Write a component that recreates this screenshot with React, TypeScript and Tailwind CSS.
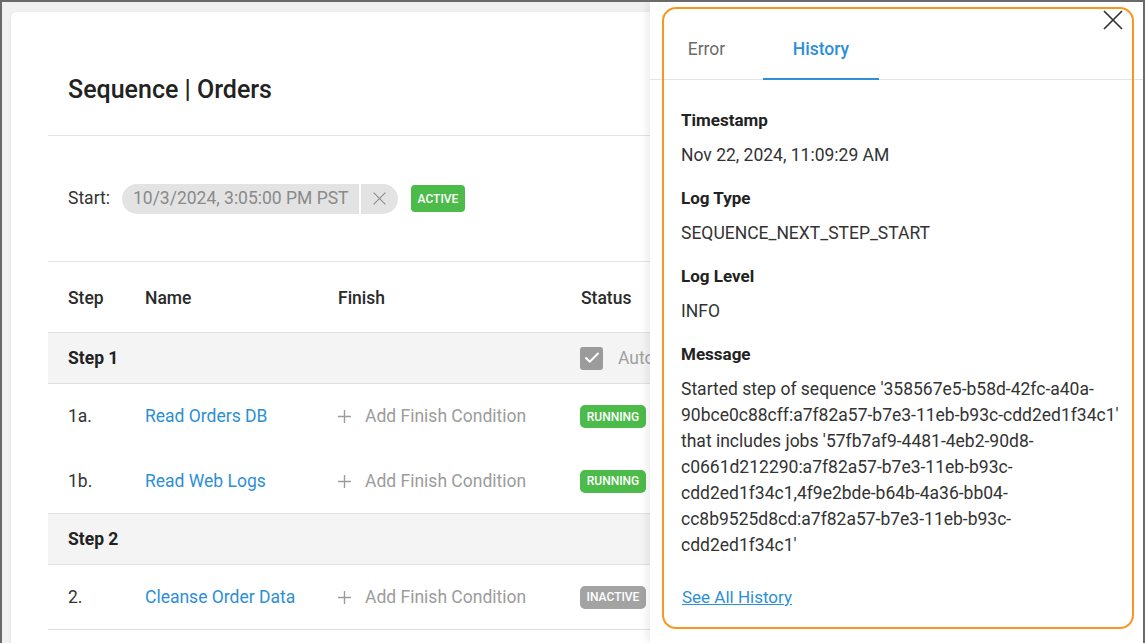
import { Check } from 'lucide-react';

type Row =
  | { kind: 'group'; label: string; auto?: boolean }
  | { kind: 'job'; step: string; name: string; status: 'RUNNING' | 'INACTIVE'; last?: boolean };

const rows: Row[] = [
  { kind: 'group', label: 'Step 1', auto: true },
  { kind: 'job', step: '1a.', name: 'Read Orders DB', status: 'RUNNING' },
  { kind: 'job', step: '1b.', name: 'Read Web Logs', status: 'RUNNING', last: true },
  { kind: 'group', label: 'Step 2' },
  { kind: 'job', step: '2.', name: 'Cleanse Order Data', status: 'INACTIVE', last: true },
];

const messageLines = [
  "Started step of sequence '358567e5-b58d-42fc-a40a-",
  "90bce0c88cff:a7f82a57-b7e3-11eb-b93c-cdd2ed1f34c1'",
  "that includes jobs '57fb7af9-4481-4eb2-90d8-",
  'c0661d212290:a7f82a57-b7e3-11eb-b93c-',
  'cdd2ed1f34c1,4f9e2bde-b64b-4a36-bb04-',
  'cc8b9525d8cd:a7f82a57-b7e3-11eb-b93c-',
  "cdd2ed1f34c1'",
];

const details = [
  { label: 'Timestamp', value: 'Nov 22, 2024, 11:09:29 AM' },
  { label: 'Log Type', value: 'SEQUENCE_NEXT_STEP_START' },
  { label: 'Log Level', value: 'INFO' },
];

function Cross({ size, stroke }: { size: number; stroke: number }) {
  return (
    <svg width={size} height={size} viewBox="0 0 20 20" fill="none" stroke="currentColor" strokeWidth={stroke}>
      <path d="M1 1L19 19M19 1L1 19" />
    </svg>
  );
}

function PlusIcon() {
  return (
    <svg width="13" height="13" viewBox="0 0 13 13" fill="none" stroke="currentColor" strokeWidth="1.4">
      <path d="M6.5 0V13M0 6.5H13" />
    </svg>
  );
}

function StatusBadge({ status }: { status: 'RUNNING' | 'INACTIVE' }) {
  return (
    <span
      className={`inline-flex h-[23px] w-[66px] items-center justify-center rounded-[5px] text-[12px] font-medium text-white ${
        status === 'RUNNING' ? 'bg-[#4cbb4a]' : 'bg-[#a3a3a3]'
      }`}
    >
      {status}
    </span>
  );
}

export default function App() {
  return (
    <div className="relative h-[643px] w-[1145px] overflow-hidden border-x-2 border-t-2 border-[#6a6a6a] bg-[#f1f1f1] font-['Roboto',sans-serif]">
      <div className="w-[648px] overflow-hidden pl-[9px] pt-[10px]">
        {/* Sequence card */}
        <div className="w-[1100px] rounded-md bg-white px-[37px] pb-10 shadow-sm">
          <div className="flex h-[123px] items-end pb-[31px] pl-5">
            <h1 className="text-[25px] leading-7 font-medium text-[#222]">Sequence | Orders</h1>
          </div>

          <div className="flex h-[126px] items-center gap-3 border-t border-[#e3e3e3] pl-5">
            <span className="text-[17.5px] text-[#333]">Start:</span>
            <div className="flex h-[30px] items-stretch overflow-hidden rounded-full bg-[#e3e3e3]">
              <span className="flex items-center pl-[11px] pr-[10px] text-[17.5px] text-[#8a8a8a]">
                10/3/2024, 3:05:00 PM PST
              </span>
              <span className="w-[2px] bg-white" />
              <span className="flex w-[37px] items-center justify-center text-[#8a8a8a]">
                <Cross size={13} stroke={1.6} />
              </span>
            </div>
            <span className="ml-[1px] inline-flex h-[27px] items-center rounded-[4px] bg-[#4cbb4a] px-[7px] text-[12px] font-medium text-white">
              ACTIVE
            </span>
          </div>

          {/* Steps table */}
          <div className="border-t border-[#e3e3e3]">
            <div className="flex h-[71px] items-center border-b border-[#e0e0e0] pt-[2px] pl-5 text-[17.5px] font-medium text-[#2a2a2a]">
              <span className="w-[77px]">Step</span>
              <span className="w-[193px]">Name</span>
              <span className="w-[243px]">Finish</span>
              <span>Status</span>
            </div>
            {rows.map((row, i) =>
              row.kind === 'group' ? (
                <div
                  key={i}
                  className="flex h-[51px] items-center border-b border-[#e0e0e0] bg-[#f4f4f4] pl-5 text-[17.5px]"
                >
                  <span className="w-[512px] font-bold text-[#222]">{row.label}</span>
                  {row.auto && (
                    <span className="flex items-center gap-[15px] text-[#a0a0a0]">
                      <span className="flex h-[23px] w-[23px] items-center justify-center rounded-[3px] bg-[#9b9b9b] text-white">
                        <Check size={18} strokeWidth={2.5} />
                      </span>
                      Auto Advance
                    </span>
                  )}
                </div>
              ) : (
                <div
                  key={i}
                  className={`flex h-[65px] items-center pl-5 text-[17.5px] ${
                    row.last ? 'border-b border-[#e0e0e0]' : ''
                  }`}
                >
                  <span className="w-[77px] text-[#333]">{row.step}</span>
                  <span className="w-[193px] text-[#2d8fd5]">{row.name}</span>
                  <span className="flex w-[242px] items-center gap-[14px] text-[#9c9c9c]">
                    <PlusIcon />
                    Add Finish Condition
                  </span>
                  <StatusBadge status={row.status} />
                </div>
              )
            )}
          </div>
        </div>
      </div>

      {/* History drawer */}
      <div className="absolute top-0 right-0 bottom-0 w-[493px] bg-white shadow-[-3px_0_8px_rgba(0,0,0,0.08)]">
        <div className="flex h-[78px] border-b border-[#e3e3e3]">
          <button className="flex w-[113px] items-center justify-center pt-[18px] text-[17.5px] text-[#6b6b6b]">
            Error
          </button>
          <button className="relative flex w-[116px] items-center justify-center pt-[18px] text-[17.5px] font-medium text-[#2d8fd5]">
            History
            <span className="absolute right-0 bottom-[-1px] left-0 h-[2px] bg-[#2d8fd5]" />
          </button>
        </div>
        <button className="absolute top-[8px] right-[20px] text-[#333]">
          <Cross size={20} stroke={1.7} />
        </button>

        <div className="pt-[27px] pr-[16px] pl-[31px] text-[17.5px] leading-[26px] text-[#333]">
          {details.map((d) => (
            <div key={d.label} className="mb-[17px]">
              <div className="text-[17px] font-bold text-[#222]">{d.label}</div>
              <div className="mt-[9px]">{d.value}</div>
            </div>
          ))}
          <div className="text-[17px] font-bold text-[#222]">Message</div>
          <div className="mt-[9px]">
            {messageLines.map((line, i) => (
              <div key={i} className="whitespace-nowrap">{line}</div>
            ))}
          </div>
          <a href="#" className="mt-[26px] ml-[1px] block text-[17px] text-[#2d8fd5] underline">
            See All History
          </a>
        </div>
      </div>

      {/* highlight outline */}
      <div className="pointer-events-none absolute top-[5px] left-[660px] h-[622px] w-[472px] rounded-[14px] border-2 border-[#f8961d]" />
    </div>
  );
}
